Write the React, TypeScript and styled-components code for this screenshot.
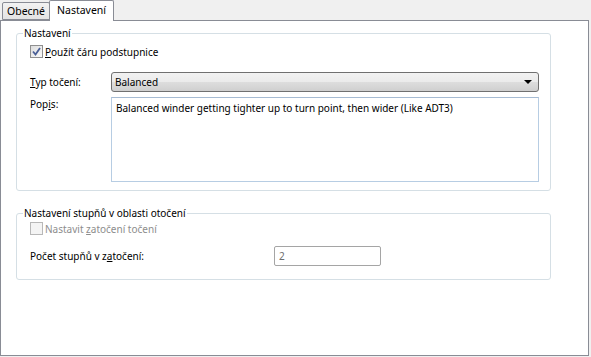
import { ReactNode } from "react";
import styled, { createGlobalStyle } from "styled-components";

const GlobalStyle = createGlobalStyle`
  html, body {
    margin: 0;
    padding: 0;
    background: #f0f0f0;
  }
  body {
    font-family: "Noto Sans", "DejaVu Sans", sans-serif;
    font-size: 10px;
    color: #000;
  }
`;

const Window = styled.div`
  width: 591px;
  height: 357px;
  display: flex;
  flex-direction: column;
  box-sizing: border-box;
`;

const TabStrip = styled.div`
  display: flex;
  align-items: flex-end;
  height: 20px;
  padding-left: 2px;
  position: relative;
  z-index: 1;
`;

const Tab = styled.div<{ $active?: boolean }>`
  box-sizing: border-box;
  height: ${(p) => (p.$active ? "21px" : "18px")};
  padding: ${(p) => (p.$active ? "2px 7px 0 7px" : "1px 4px 0 4px")};
  margin-bottom: ${(p) => (p.$active ? "-1px" : "0")};
  border: 1px solid #898c95;
  border-bottom: ${(p) => (p.$active ? "none" : "1px solid #898c95")};
  margin-left: ${(p) => (p.$active ? "-1px" : "0")};
  background: ${(p) =>
    p.$active ? "#fff" : "linear-gradient(#f2f2f2, #e3e3e3)"};
  border-radius: 2px 2px 0 0;
  line-height: 15px;
  font-size: 10.5px;
  white-space: nowrap;
`;

const Panel = styled.div`
  width: 589px;
  height: 336px;
  box-sizing: border-box;
  border: 1px solid #898c95;
  background: #fff;
  padding: 5px 37px 0 15px;
  display: flex;
  flex-direction: column;
`;

const Group = styled.fieldset`
  margin: 0;
  border: 1px solid #d5dfe5;
  border-radius: 3px;
  padding: 0 11px 0 13px;
  display: flex;
  flex-direction: column;
  & + & {
    margin-top: 15px;
  }
`;

const Legend = styled.legend`
  padding: 0 1px;
  margin-left: -7px;
  line-height: 14px;
  height: 14px;
`;

const Body = styled.div<{ $top: number; $bottom: number }>`
  display: flex;
  flex-direction: column;
  padding-top: ${(p) => p.$top}px;
  padding-bottom: ${(p) => p.$bottom}px;
`;

const CheckRow = styled.label<{ $disabled?: boolean }>`
  display: flex;
  align-items: center;
  gap: 2px;
  height: 13px;
  color: ${(p) => (p.$disabled ? "#8d8d8d" : "#000")};
`;

const Box = styled.span<{ $disabled?: boolean }>`
  width: 13px;
  height: 13px;
  box-sizing: border-box;
  border: 1px solid ${(p) => (p.$disabled ? "#b8b8b8" : "#8f8f8f")};
  background: ${(p) =>
    p.$disabled
      ? "#f4f4f4"
      : "linear-gradient(135deg, #dcdcdc, #fbfbfb)"};
  display: flex;
  align-items: center;
  justify-content: center;
  flex: none;
`;

const FieldRow = styled.div<{ $top: number; $align?: string }>`
  display: flex;
  align-items: ${(p) => p.$align ?? "center"};
  margin-top: ${(p) => p.$top}px;
`;

const Label = styled.span<{ $width: number; $offset?: number }>`
  width: ${(p) => p.$width}px;
  flex: none;
  padding-top: ${(p) => p.$offset ?? 0}px;
`;

const Combo = styled.div`
  flex: 1;
  height: 20px;
  box-sizing: border-box;
  border: 1px solid #707070;
  border-radius: 3px;
  background: linear-gradient(#f2f2f2 0%, #ebebeb 48%, #dddddd 52%, #cfcfcf 100%);
  display: flex;
  align-items: center;
  justify-content: space-between;
  padding: 0 6px 0 3px;
`;

const Arrow = styled.span`
  width: 0;
  height: 0;
  border-left: 4px solid transparent;
  border-right: 4px solid transparent;
  border-top: 4px solid #000;
`;

const TextArea = styled.div`
  flex: 1;
  height: 85px;
  box-sizing: border-box;
  border: 1px solid #b7cde3;
  border-top-color: #a6bbd3;
  padding: 3px 4px;
  line-height: 14px;
`;

const Input = styled.div`
  width: 107px;
  height: 20px;
  box-sizing: border-box;
  border: 1px solid #a5a5a5;
  border-radius: 2px;
  color: #6d6d6d;
  padding: 0 4px;
  line-height: 18px;
`;

function Key({ children }: { children: ReactNode }) {
  return <u>{children}</u>;
}

function CheckBox({ checked, disabled }: { checked?: boolean; disabled?: boolean }) {
  return (
    <Box $disabled={disabled}>
      {checked && (
        <svg width="9" height="9" viewBox="0 0 9 9">
          <path d="M1 4.5 L3.5 7.5 L8 1" fill="none" stroke="#4a5f97" strokeWidth="1.8" />
        </svg>
      )}
    </Box>
  );
}

export default function App() {
  return (
    <Window>
      <GlobalStyle />
      <TabStrip>
        <Tab>Obecné</Tab>
        <Tab $active>Nastavení</Tab>
      </TabStrip>
      <Panel>
        <Group>
          <Legend>Nastavení</Legend>
          <Body $top={5} $bottom={8}>
            <CheckRow>
              <CheckBox checked />
              <span>
                <Key>P</Key>oužít čáru podstupnice
              </span>
            </CheckRow>
            <FieldRow $top={14}>
              <Label $width={81}>
                <Key>T</Key>yp točení:
              </Label>
              <Combo>
                <span>Balanced</span>
                <Arrow />
              </Combo>
            </FieldRow>
            <FieldRow $top={5} $align="flex-start">
              <Label $width={81} $offset={0}>
                Pop<Key>i</Key>s:
              </Label>
              <TextArea>
                Balanced winder getting tighter up to turn point, then wider (Like ADT3)
              </TextArea>
            </FieldRow>
          </Body>
        </Group>
        <Group>
          <Legend>Nastavení stupňů v oblasti otočení</Legend>
          <Body $top={2} $bottom={13}>
            <CheckRow $disabled>
              <CheckBox disabled />
              <span>
                Nastavit <Key>z</Key>atočení točení
              </span>
            </CheckRow>
            <FieldRow $top={11}>
              <Label $width={244}>
                Počet stupňů v z<Key>a</Key>točení:
              </Label>
              <Input>2</Input>
            </FieldRow>
          </Body>
        </Group>
      </Panel>
    </Window>
  );
}
